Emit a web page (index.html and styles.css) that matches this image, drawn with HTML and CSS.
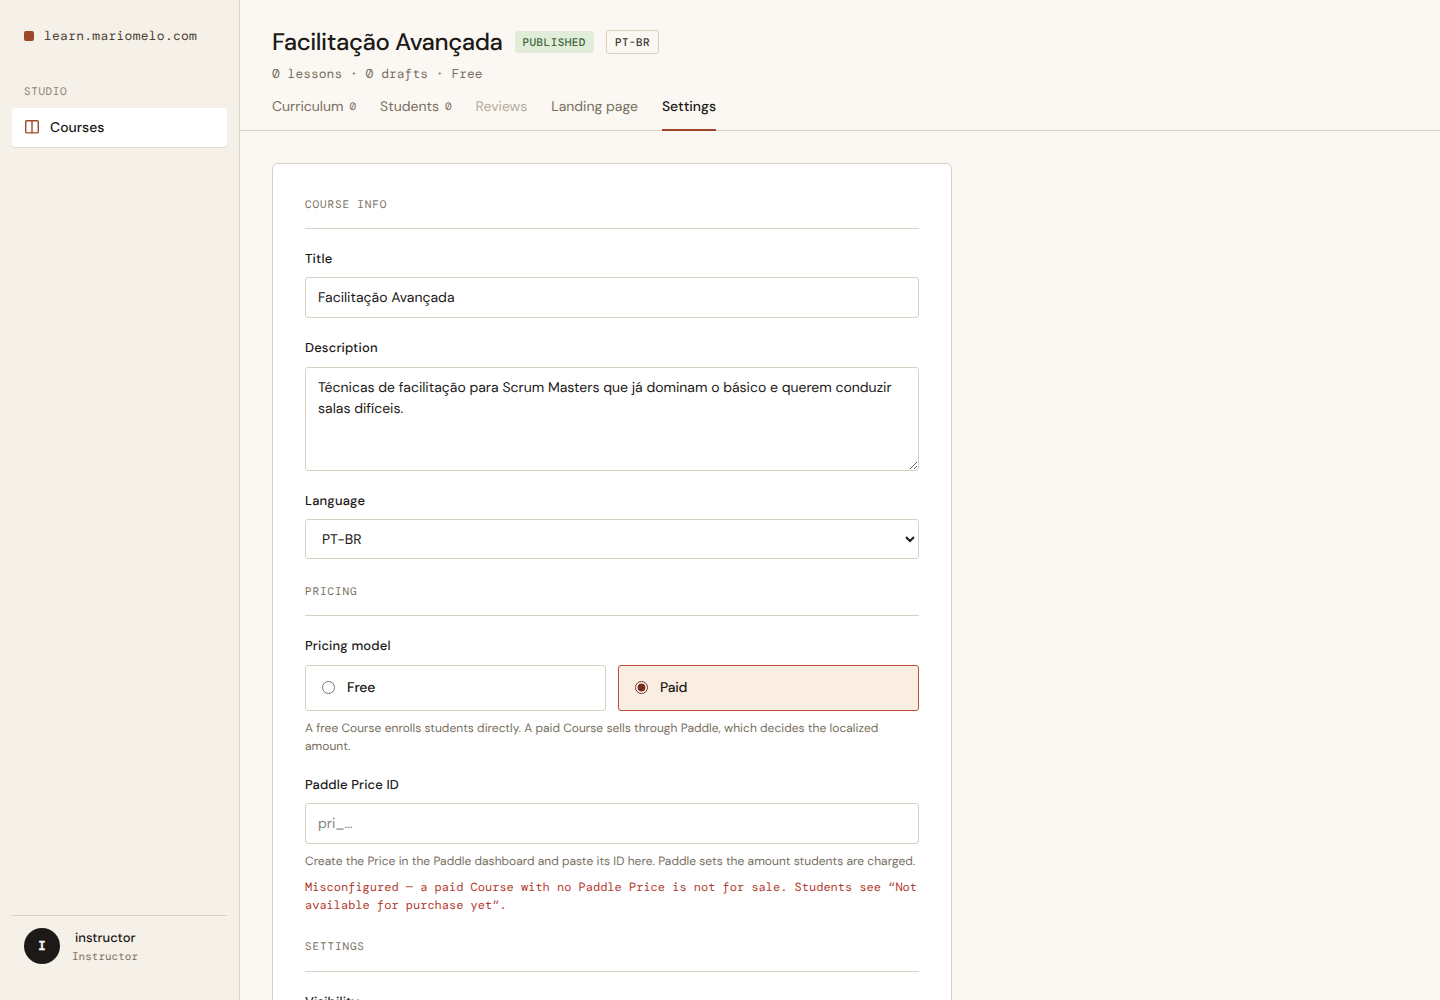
FILE: index.html
```html
<!DOCTYPE html>
<html lang="en">
<head>
<meta charset="utf-8">
<title>Facilitação Avançada</title>
<link rel="stylesheet" href="styles.css">
</head>
<body>
<div class="app">
  <aside class="sidebar">
    <a class="brand"><span class="brand-mark"></span><span class="brand-name">learn.mariomelo.com</span></a>
    <div class="nav-heading">STUDIO</div>
    <a class="nav-item">
      <svg class="nav-icon" width="16" height="16" viewBox="0 0 16 16" fill="none" stroke="currentColor" stroke-width="1.4"><rect x="1.7" y="1.7" width="12.6" height="12.2" rx="1.2"/><path d="M8 1.7v12.2"/></svg>
      <span class="nav-label">Courses</span>
    </a>
    <div class="account">
      <span class="avatar">I</span>
      <div class="account-text"><span class="account-name">instructor</span><span class="account-role">Instructor</span></div>
    </div>
  </aside>
  <main class="main">
    <header class="header">
      <div class="title-row">
        <h1>Facilitação Avançada</h1>
        <span class="badge badge-published">PUBLISHED</span>
        <span class="badge badge-lang">PT-BR</span>
      </div>
      <p class="meta">0 lessons · 0 drafts · Free</p>
      <nav class="tabs">
        <a class="tab"><span>Curriculum</span><span class="count">0</span></a>
        <a class="tab"><span>Students</span><span class="count">0</span></a>
        <a class="tab disabled">Reviews</a>
        <a class="tab">Landing page</a>
        <a class="tab active">Settings</a>
      </nav>
    </header>
    <form class="card">
      <h2 class="first">COURSE INFO</h2>
      <div class="field">
        <label for="title">Title</label>
        <input class="control" id="title" type="text" value="Facilitação Avançada">
      </div>
      <div class="field">
        <label for="description">Description</label>
        <textarea class="control" id="description">Técnicas de facilitação para Scrum Masters que já dominam o básico e querem conduzir salas difíceis.</textarea>
      </div>
      <div class="field">
        <label for="language">Language</label>
        <select class="control" id="language"><option>PT-BR</option></select>
      </div>
      <h2>PRICING</h2>
      <div class="field">
        <label>Pricing model</label>
        <div class="options">
          <label class="option"><input type="radio" name="pricing"><span>Free</span></label>
          <label class="option selected"><input type="radio" name="pricing" checked><span>Paid</span></label>
        </div>
        <p class="help">A free Course enrolls students directly. A paid Course sells through Paddle, which decides the localized amount.</p>
      </div>
      <div class="field">
        <label for="price">Paddle Price ID</label>
        <input class="control" id="price" type="text" placeholder="pri_…">
        <p class="help">Create the Price in the Paddle dashboard and paste its ID here. Paddle sets the amount students are charged.</p>
        <p class="warning">Misconfigured — a paid Course with no Paddle Price is not for sale. Students see “Not available for purchase yet”.</p>
      </div>
      <h2 class="settings-heading">SETTINGS</h2>
      <div class="field"><label>Visibility</label></div>
    </form>
  </main>
</div>
</body>
</html>
```
FILE: styles.css
```css
:root {
  --sans: "DM Sans", Inter, sans-serif;
  --mono: "DM Mono", "Liberation Mono", monospace;
  --ink: #1c1917;
  --muted: #786f61;
  --line: #d9d0c3;
  --accent: #9f4628;
}
* { box-sizing: border-box; }
body { margin: 0; background: #fbf8f3; color: var(--ink); font: 14px/21px var(--sans); text-rendering: geometricPrecision; -webkit-font-smoothing: antialiased; }
h1, h2, p { margin: 0; font-weight: 400; }

.app { display: flex; height: 1000px; overflow: hidden; }
.sidebar { display: flex; flex-direction: column; flex: none; width: 240px; padding: 24px 12px; background: #f5f0e8; border-right: 1px solid #d9d4c2; }
.brand { display: flex; align-items: center; gap: 10px; height: 24px; padding: 0 12px; font: 13px/22px var(--mono); letter-spacing: .26px; color: #4a4337; }
.brand-name { padding-top: 2px; }
.brand-mark { width: 10px; height: 10px; border-radius: 2px; background: var(--accent); }
.nav-heading { height: 18px; margin-top: 34px; padding: 0 12px; font: 11px/20px var(--mono); letter-spacing: .6px; color: #8c8373; }
.nav-item { display: flex; align-items: center; gap: 10px; height: 39px; margin-top: 8px; padding: 0 12px; border-radius: 3px; background: #fff; box-shadow: 0 1px 1px rgba(28, 25, 23, .1); font-weight: 500; }
.nav-label { padding-top: 2px; }
.nav-icon { margin-bottom: 1px; color: var(--accent); }
.account { display: flex; gap: 12px; height: 61px; margin-top: auto; padding: 12px; border-top: 1px solid #d9d4c2; }
.avatar { display: grid; place-items: center; width: 36px; height: 36px; padding-top: 2px; border-radius: 50%; background: var(--ink); color: #fbf8f3; font: 500 13px/18px var(--mono); -webkit-text-stroke: .5px currentColor; }
.account-text { display: flex; flex-direction: column; }
.account-name { height: 20px; padding-left: 3px; font-size: 13px; line-height: 22px; font-weight: 500; }
.account-role { font: 11px/19px var(--mono); color: var(--muted); }

.main { flex: 1; min-width: 0; }
.header { height: 131px; padding: 24px 32px 0; border-bottom: 1px solid var(--line); }
.title-row { display: flex; align-items: center; gap: 12px; height: 36px; }
h1 { padding-top: 2px; font-size: 24px; line-height: 34px; font-weight: 500; letter-spacing: -.42px; }
.badge { height: 22px; padding: 0 8px; border-radius: 3px; font: 500 11px/24px var(--mono); letter-spacing: .44px; }
.badge-published { background: #e2edd9; color: #3e693a; }
.badge-lang { height: 24px; border: 1px solid #d9d0bd; color: #3d372e; }
.meta { height: 20px; margin-top: 4px; font: 13px/22px var(--mono); color: var(--muted); }
.tabs { display: flex; gap: 24px; height: 47px; }
.tab { display: flex; gap: 6px; height: 47px; line-height: 21px; padding-top: 13px; color: var(--muted); }
.tab.disabled { color: #b5ad9d; }
.tab.active { color: var(--ink); font-weight: 500; border-bottom: 2px solid var(--accent); }
.count { font: 11px/21px var(--mono); }

.card { width: 680px; height: 1200px; margin: 32px; padding: 31.7px 32px 32px; border: 1px solid var(--line); border-radius: 6px; background: #fff; }
h2 { height: 33px; margin: 24px 0 20px; border-bottom: 1px solid var(--line); font: 11px/18px var(--mono); letter-spacing: .88px; color: var(--muted); }
h2.first { margin-top: 0; }
h2.settings-heading { height: 33.6px; }
.field + .field { margin-top: 20px; }
.field > label { display: block; height: 20.5px; margin-bottom: 8px; font-size: 13px; line-height: 22px; font-weight: 500; letter-spacing: .16px; }
.control { display: block; width: 100%; height: 41px; margin: 0; padding: 9px 12px; border: 1px solid var(--line); border-radius: 3px; background: #fff; color: var(--ink); font: 14px/21px var(--sans); text-rendering: inherit; }
.control::placeholder { color: #858585; }
textarea.control { height: 104px; padding-top: 10px; resize: vertical; }
select.control { height: 40px; padding: 10px 12px 8px; }
.options { display: grid; grid-template-columns: 1fr 1fr; gap: 12px; }
.option { display: flex; align-items: center; gap: 12px; height: 46px; padding: 0 16px; border: 1px solid var(--line); border-radius: 3px; font-weight: 500; letter-spacing: -.2px; }
.option span { padding-top: 2px; }
.option input { width: 13px; height: 13px; margin: 0; accent-color: #76301a; }
.option.selected { border-color: #b95336; background: #faeee2; }
.help { margin-top: 8px; font-size: 12px; line-height: 18px; letter-spacing: .022px; color: var(--muted); }
.warning { margin-top: 8px; font: 12px/18px var(--mono); color: #b03a2e; }
```
